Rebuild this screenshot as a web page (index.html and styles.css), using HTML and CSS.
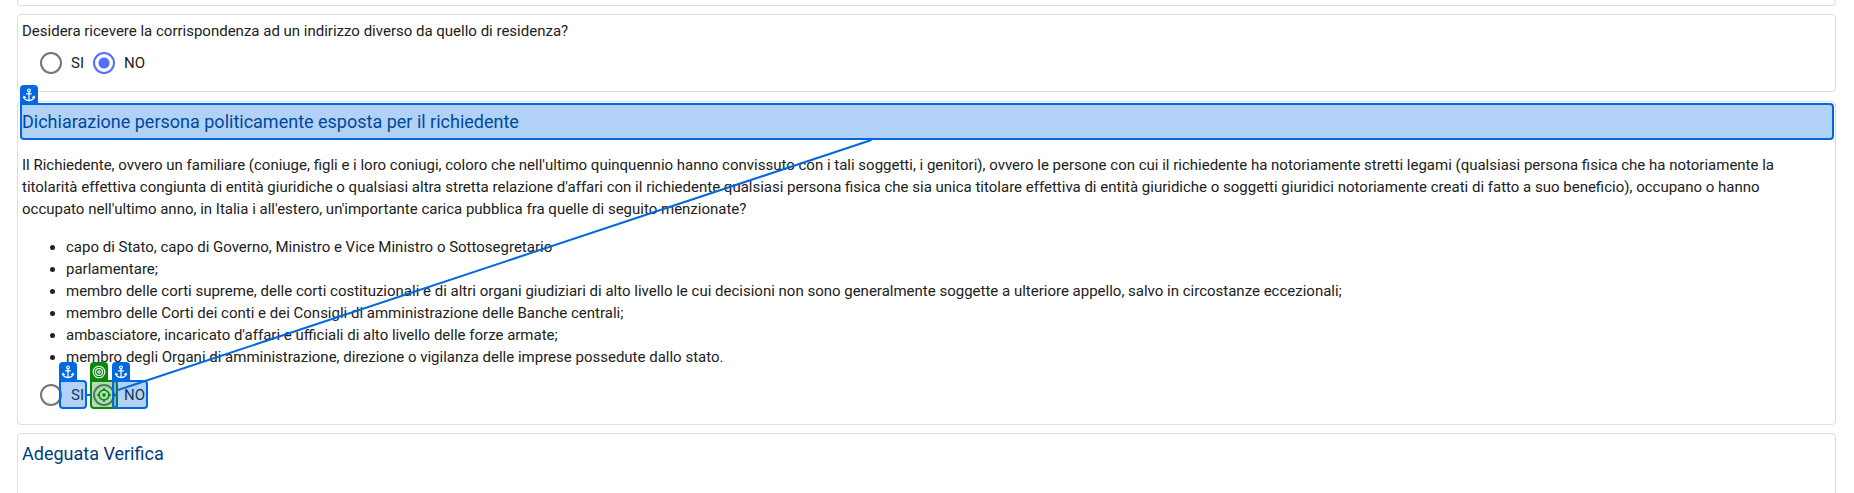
FILE: index.html
```
<!DOCTYPE html>
<html lang="it">
<head>
<meta charset="utf-8">
<title>Questionario richiedente</title>
<link rel="stylesheet" href="styles.css">
</head>
<body>
<svg class="defs" aria-hidden="true">
  <symbol id="anchor" viewBox="0 0 14 14">
    <g fill="none" stroke="currentColor" stroke-width="1.2" stroke-linecap="round">
      <circle cx="7" cy="2.4" r="1.4"/>
      <path d="M7 3.8V12.4M4.6 5.8H9.4M2 8.6C2.2 11.2 4.6 12.4 7 12.6C9.4 12.4 11.8 11.2 12 8.6M1.4 9.8L2 8.4L3.4 9.4M12.6 9.8L12 8.4L10.6 9.4"/>
    </g>
  </symbol>
  <symbol id="rings" viewBox="0 0 14 14">
    <g fill="none" stroke="currentColor" stroke-width="1.1">
      <circle cx="7" cy="7" r="5.8"/><circle cx="7" cy="7" r="3.5"/><circle cx="7" cy="7" r="1.2"/>
    </g>
  </symbol>
</svg>
<main class="page">
  <section class="card card-previous"></section>

  <section class="card">
    <fieldset class="question">
      <legend class="text">Desidera ricevere la corrispondenza ad un indirizzo diverso da quello di residenza?</legend>
      <div class="options">
        <label class="option"><input class="radio" type="radio" name="posta">SI</label>
        <label class="option"><input class="radio" type="radio" name="posta" checked>NO</label>
      </div>
    </fieldset>
  </section>

  <section class="card card-pep">
    <h2 class="title title-marked">Dichiarazione persona politicamente esposta per il richiedente
      <span class="mark mark-title"><span class="badge"><svg class="glyph"><use href="#anchor"/></svg></span></span>
    </h2>
    <p class="text statement">Il Richiedente, ovvero un familiare (coniuge, figli e i loro coniugi, coloro che nell'ultimo quinquennio hanno convissuto con i tali soggetti, i genitori), ovvero le persone con cui il richiedente ha notoriamente stretti legami (qualsiasi persona fisica che ha notoriamente la titolarità effettiva congiunta di entità giuridiche o qualsiasi altra stretta relazione d'affari con il richiedente qualsiasi persona fisica che sia unica titolare effettiva di entità giuridiche o soggetti giuridici notoriamente creati di fatto a suo beneficio), occupano o hanno occupato nell'ultimo anno, in Italia i all'estero, un'importante carica pubblica fra quelle di seguito menzionate?</p>
    <ul class="text roles">
      <li>capo di Stato, capo di Governo, Ministro e Vice Ministro o Sottosegretario</li>
      <li>parlamentare;</li>
      <li>membro delle corti supreme, delle corti costituzionali e di altri organi giudiziari di alto livello le cui decisioni non sono generalmente soggette a ulteriore appello, salvo in circostanze eccezionali;</li>
      <li>membro delle Corti dei conti e dei Consigli di amministrazione delle Banche centrali;</li>
      <li>ambasciatore, incaricato d'affari e ufficiali di alto livello delle forze armate;</li>
      <li>membro degli Organi di amministrazione, direzione o vigilanza delle imprese possedute dallo stato.</li>
    </ul>
    <div class="options options-marked">
      <label class="option"><input class="radio" type="radio" name="pep">SI</label>
      <label class="option"><input class="radio" type="radio" name="pep">NO</label>
      <span class="mark mark-si"><span class="badge"><svg class="glyph"><use href="#anchor"/></svg></span></span>
      <span class="mark mark-target"><span class="badge"><svg class="glyph"><use href="#rings"/></svg></span></span>
      <span class="mark mark-no"><span class="badge"><svg class="glyph"><use href="#anchor"/></svg></span></span>
      <span class="joint joint-si"></span>
      <span class="joint joint-no"></span>
      <svg class="aim" viewBox="0 0 16 16"><g fill="none" stroke="currentColor" stroke-width="1.6"><circle cx="8" cy="8" r="5"/><path d="M8 1V4M8 12V15M1 8H4M12 8H15"/></g><circle cx="8" cy="8" r="1.8" fill="currentColor"/></svg>
    </div>
    <svg class="link" viewBox="0 0 753 250" preserveAspectRatio="none" aria-hidden="true"><path d="M0 250L753 0"/></svg>
  </section>

  <section class="card card-next">
    <h2 class="title">Adeguata Verifica</h2>
  </section>
</main>
</body>
</html>
```
FILE: styles.css
```
* { box-sizing: border-box; }
body {
  margin: 0;
  background: #fff;
  color: #212121;
  font-family: Roboto, "Liberation Sans", sans-serif;
  font-size: 15px;
  font-weight: 400;
  line-height: 22px;
}
.defs { position: absolute; width: 0; height: 0; }
.page {
  display: flex;
  flex-direction: column;
  gap: 8px;
  height: 100vh;
  padding: 0 18px 0 17px;
  overflow: hidden;
}
.card {
  position: relative;
  flex: none;
  padding: 5px 4px;
  border: 1px solid #dedede;
  border-radius: 4px;
}
.card-previous { height: 6px; padding: 0; border-top: 0; border-radius: 0 0 4px 4px; }
.card-pep { padding-bottom: 18px; margin-top: 1px; }
.card-next { height: 80px; }
.question { margin: 0; padding: 0 0 12px; border: 0; }
.question legend { padding: 0; }
.text { margin: 0; }
.title { margin: 0; font-size: 18px; font-weight: 400; line-height: 30px; color: #003b7c; }
.title-marked { position: relative; }
.statement { padding: 17px 24px 0 0; }
.roles { padding: 16px 0 0 44px; }
.options { position: relative; display: flex; gap: 9px; margin-left: 1px; padding: 10px 0 0 17px; }
.options-marked { padding-top: 16px; }
.option { display: flex; align-items: center; gap: 9px; }
.radio {
  appearance: none;
  width: 22px;
  height: 22px;
  margin: 0;
  border: 2px solid #757575;
  border-radius: 50%;
}
.radio:checked {
  border-color: #536dfe;
  background: radial-gradient(circle, #536dfe 5px, transparent 6px);
}
.mark {
  position: absolute;
  border: 2px solid #0068e0;
  border-radius: 0 4px 4px 4px;
  background: rgba(0, 104, 224, .3);
}
.badge {
  position: absolute;
  left: -2px;
  bottom: 100%;
  display: grid;
  place-items: center;
  width: 18px;
  height: 20px;
  border-radius: 4px 4px 0 0;
  background: #0068e0;
  color: #fff;
}
.glyph { width: 14px; height: 14px; }
.mark-title { inset: -4px -3px -3px -2px; }
.mark-si { left: 36px; top: 12px; width: 28px; height: 29px; }
.mark-target { left: 67px; top: 12px; width: 28px; height: 29px; border-color: #088a08; background: rgba(8, 138, 8, .3); }
.mark-target .badge { background: #088a08; }
.mark-no { left: 89px; top: 12px; width: 36px; height: 29px; }
.joint { position: absolute; top: 26px; width: 4px; height: 2px; background: #0068e0; }
.joint-si { left: 64px; }
.joint-no { left: 91px; }
.aim { position: absolute; left: 73px; top: 19px; width: 16px; height: 16px; color: #088a08; }
.link { position: absolute; left: 100px; top: 38px; width: calc(50% - 155px); height: 250px; overflow: visible; }
.link path { fill: none; stroke: #0068e0; stroke-width: 2; }
```
